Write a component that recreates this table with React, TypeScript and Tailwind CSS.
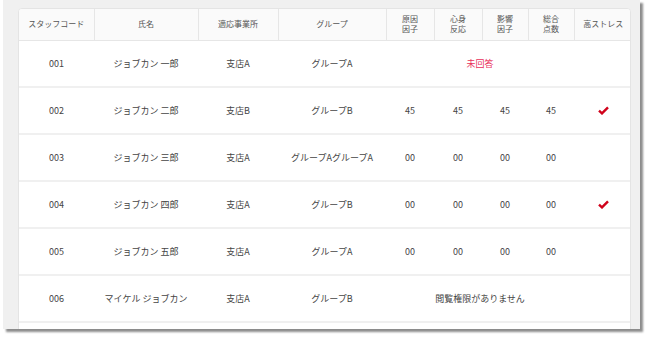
import React from "react";

type Row = {
  code: string;
  name: string;
  office: string;
  group: string;
  scores?: [string, string, string, string];
  note?: { text: string; red?: boolean };
  high?: boolean;
};

const ROWS: Row[] = [
  { code: "001", name: "ジョブカン 一郎", office: "支店A", group: "グループA", note: { text: "未回答", red: true } },
  { code: "002", name: "ジョブカン 二郎", office: "支店B", group: "グループB", scores: ["45", "45", "45", "45"], high: true },
  { code: "003", name: "ジョブカン 三郎", office: "支店A", group: "グループAグループA", scores: ["00", "00", "00", "00"] },
  { code: "004", name: "ジョブカン 四郎", office: "支店A", group: "グループB", scores: ["00", "00", "00", "00"], high: true },
  { code: "005", name: "ジョブカン 五郎", office: "支店A", group: "グループA", scores: ["00", "00", "00", "00"] },
  { code: "006", name: "マイケル ジョブカン", office: "支店A", group: "グループB", note: { text: "閲覧権限がありません" } },
  { code: "007", name: "", office: "", group: "" },
];

const WIDTHS = [75, 104, 80, 108, 48, 48, 46, 46, 58];

function Check() {
  return (
    <svg width="11" height="9" viewBox="0 0 11 9" className="mx-auto block">
      <path d="M1 4.6 L4 7.4 L10 1.4" fill="none" stroke="#d0021b" strokeWidth="2.4" strokeLinejoin="miter" />
    </svg>
  );
}

export default function App() {
  const th = "border-r border-[#e6e6e6] last:border-r-0 text-center font-normal text-[8px] leading-[10px] text-[#555]";
  const td = "text-center text-[9px] text-[#444]";
  return (
    <div
      className="w-[650px] h-[339px] bg-white overflow-hidden"
      style={{ fontFamily: '"Noto Sans CJK JP", "Noto Sans", sans-serif' }}
    >
      <div className="ml-[3px] w-[637px] h-[329px] bg-[#f0f0f0] shadow-[3px_3px_2px_rgba(0,0,0,0.45)] overflow-hidden pt-[8px] pl-[15px]">
        <div className="w-[613px] bg-white border border-[#e4e4e4] rounded-t-[4px] overflow-hidden">
          <table className="w-full table-fixed border-collapse">
            <colgroup>
              {WIDTHS.map((w, i) => (
                <col key={i} style={{ width: w }} />
              ))}
            </colgroup>
            <thead>
              <tr className="h-[31px] bg-[#fafafa] border-b border-[#e6e6e6]">
                <th className={th}>スタッフコード</th>
                <th className={th}>氏名</th>
                <th className={th}>適応事業所</th>
                <th className={th}>グループ</th>
                <th className={th}>原因<br />因子</th>
                <th className={th}>心身<br />反応</th>
                <th className={th}>影響<br />因子</th>
                <th className={th}>総合<br />点数</th>
                <th className={th}>高ストレス</th>
              </tr>
            </thead>
            <tbody>
              {ROWS.map((r) => (
                <tr key={r.code} className="h-[47px] border-b-2 border-[#f0f0f0]">
                  <td className={td}>{r.name ? r.code : ""}</td>
                  <td className={td}>{r.name}</td>
                  <td className={td}>{r.office}</td>
                  <td className={td}>{r.group}</td>
                  {r.note ? (
                    <td colSpan={4} className={`${td} ${r.note.red ? "text-[#e8305a]" : ""}`}>
                      {r.note.text}
                    </td>
                  ) : r.scores ? (
                    r.scores.map((s, i) => (
                      <td key={i} className={td}>{s}</td>
                    ))
                  ) : (
                    <td colSpan={4} />
                  )}
                  <td className={td}>{r.high ? <Check /> : null}</td>
                </tr>
              ))}
            </tbody>
          </table>
        </div>
      </div>
    </div>
  );
}
